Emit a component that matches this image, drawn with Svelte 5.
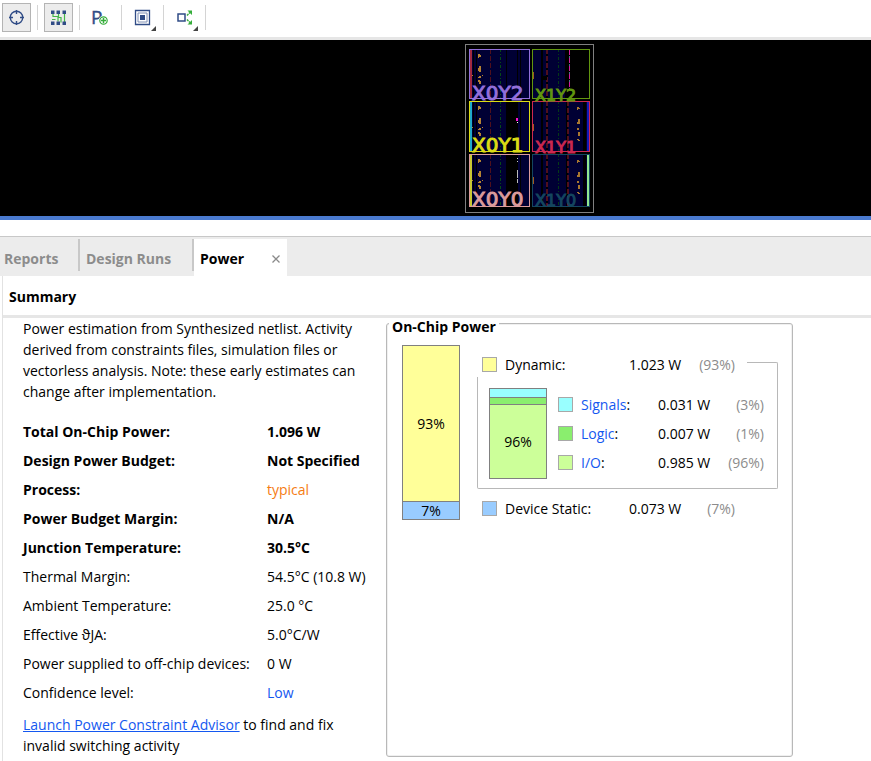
<script>
  const properties = [
    { label: 'Total On-Chip Power:', value: '1.096 W', bold: true },
    { label: 'Design Power Budget:', value: 'Not Specified', bold: true },
    { label: 'Process:', value: 'typical', bold: true, tone: 'orange' },
    { label: 'Power Budget Margin:', value: 'N/A', bold: true },
    { label: 'Junction Temperature:', value: '30.5°C', bold: true },
    { label: 'Thermal Margin:', value: '54.5°C (10.8 W)' },
    { label: 'Ambient Temperature:', value: '25.0 °C' },
    { label: 'Effective ϑJA:', value: '5.0°C/W' },
    { label: 'Power supplied to off-chip devices:', value: '0 W' },
    { label: 'Confidence level:', value: 'Low', tone: 'blue' }
  ];

  const dynamicParts = [
    { name: 'Signals', watts: '0.031 W', share: '(3%)', color: '#99ffff' },
    { name: 'Logic', watts: '0.007 W', share: '(1%)', color: '#8aee6e' },
    { name: 'I/O', watts: '0.985 W', share: '(96%)', color: '#ccff99' }
  ];

  // Clock regions of the device, in canvas units
  const regions = [
    { name: 'X0Y2', x: 4, y: 5, w: 61, h: 50, color: '#9370db', size: 20, base: 56 },
    { name: 'X1Y2', x: 67, y: 5, w: 58, h: 50, color: '#62960f', size: 16, base: 57 },
    { name: 'X0Y1', x: 4, y: 57, w: 61, h: 51, color: '#dcdc14', size: 20, base: 108, edge: '#20a8c8' },
    { name: 'X1Y1', x: 67, y: 57, w: 58, h: 51, color: '#cc2850', size: 16, base: 109 },
    { name: 'X0Y0', x: 4, y: 110, w: 61, h: 53, color: '#dc9c9c', size: 20, base: 162, edge: '#c8c832' },
    { name: 'X1Y0', x: 67, y: 110, w: 58, h: 53, color: '#14465f', size: 16, base: 162 }
  ];
</script>

<div class="app">
  <div class="toolbar" role="toolbar" aria-label="Device view">
    <button class="tool on" aria-label="Center view">
      <svg viewBox="0 0 29 29" fill="none" stroke="#304c86" stroke-width="1.4">
        <circle cx="14.5" cy="14.5" r="6.2" />
        <path d="M14.5 7v4M14.5 18v4M7 14.5h4M18 14.5h4" />
      </svg>
    </button>
    <i></i>
    <button class="tool on" aria-label="Routing resources">
      <svg viewBox="0 0 29 29" fill="none">
        <path d="M9 10v3.500h5v5M8 16.500h3.500M14.500 10v4.500h2.500v5M20.500 10v9" stroke="#45b649" stroke-width="1.2" />
        <path d="M7 7.500h3.500v3.500H7zM12.500 7.500H16v3.500h-3.500zM18.500 7.500H22v3.500h-3.500zM7 18.500h3.500V22H7zM12.500 18.500H16V22h-3.500zM18.500 18.500H22V22h-3.500z" fill="#304c86" />
      </svg>
    </button>
    <i></i>
    <button class="tool" aria-label="Add Pblock">
      <svg viewBox="0 0 29 29">
        <text x="5" y="21" font-size="19" fill="#304c86" stroke="#304c86" stroke-width=".4">P</text>
        <circle cx="17.500" cy="17.500" r="4.800" fill="#fff" />
        <circle cx="17.500" cy="17.500" r="3.700" fill="#fff" stroke="#35ad3b" stroke-width="1.200" />
        <path d="M17.500 15v5M15 17.500h5" stroke="#35ad3b" stroke-width="1.500" />
      </svg>
    </button>
    <i></i>
    <button class="tool" aria-label="Fit selection">
      <svg viewBox="0 0 29 29" fill="none" stroke="#304c86">
        <path d="M7.500 7.500h14v14h-14z" stroke-width="1.300" />
        <path d="M10 10h9v9h-9z" stroke="#8090b4" />
        <path d="M12 12h5v5h-5z" fill="#304c86" stroke="none" />
        <path d="M28 23v5h-5z" fill="#444" stroke="none" />
      </svg>
    </button>
    <i></i>
    <button class="tool" aria-label="Expand">
      <svg viewBox="0 0 29 29" fill="none">
        <path d="M8 11h7v7H8z" stroke="#304c86" stroke-width="1.500" />
        <path d="M17 12.500l3-3M17 16.500l3 3" stroke="#35ad3b" stroke-width="1.500" stroke-dasharray="2 .7" />
        <path d="M17.500 7.500H22V12zM17.500 21.500H22V17z" fill="#35ad3b" />
        <path d="M28 23v5h-5z" fill="#444" />
      </svg>
    </button>
    <i></i>
  </div>

  <div class="device">
    <svg width="129" height="169" viewBox="0 0 129 169" shape-rendering="crispEdges">
      <path d="M.5.500h128v168H.5z" fill="none" stroke="#808080" />
      {#each regions as r, n}
        {@const right = n % 2}
        <svg x={r.x} y={r.y} width={r.w} height={r.h}>
          <rect width={r.w} height={r.h} fill="#000034" />
          {#if right}
            <path d="M9.500 0v53M14.500 0v53M35 0v53" stroke="#000" stroke-width="2" />
            <path d="M14.500 0v53" stroke="#50101c" stroke-width="2" stroke-dasharray="5 2" />
            <path d="M26.500 0v53" stroke="#063b16" stroke-dasharray="3 2 1 2" />
            {#if n === 1}
              <path d="M33 0h25v53H33z" fill="#000" />
              <path d="M37.500 1v40" stroke="#d31aa0" stroke-dasharray="5 3" />
              <path d="M37.500 7v36" stroke="#55708c" stroke-dasharray="2 6" />
              <path d="M11 27h4v4h-4z" fill="#000" />
            {:else}
              <path d="M35.500 0v53" stroke="#50101c" stroke-width="2" stroke-dasharray="5 2" />
              <path d="M52 0v53" stroke="#000" stroke-width="3" />
              <path d="M45 6h2v1h1v1h-2v1h-1zM46 18h2v5h-2zM45 21h1v2h-1zM45 27h2v2h-2zM46 31h2v4h-2zM45 38h2v1h1v1h-2z" fill="#a87830" />
              <path d="M55 0h3v53h-3z" fill={n === 3 ? '#1818b8' : '#90e890'} />
            {/if}
            <path d="M1 23h1v7H1z" fill="#a05a20" />
          {:else}
            <path d="M4.500 0v53M7.500 0v53M37.500 0v53M48.500 0v53M51.500 0v53" stroke="#000" />
            {#if n > 0}<path d="M37 0h12v53H37z" fill="#000" />{/if}
            <path d="M1.500 0v53" stroke={r.edge ?? '#a02840'} stroke-width="3" />
            <path d="M21.500 0v53" stroke="#50101c" stroke-dasharray="5 2" />
            <path d="M31.500 0v53" stroke="#064b16" stroke-dasharray="3 2 1 2" />
            <path d="M9 5h2v1h1v2h-2v1H9zM10 17h2v6h-2zM9 19h1v3H9zM10 27h2v2H9v-1h1zM9 31h2v1h1v3h-2v-2H9z" fill="#b58332" />
            <path d="M3 26h1v1H3zM13 26h1v1h-1z" fill="#b58332" />
            {#if n === 2}<path d="M47 17h2v3h-2z" fill="#ff10d0" /><path d="M48 21h1v1h-1z" fill="#fff" />{/if}
            {#if n === 4}<path d="M48.500 4v5" stroke="#ccc" stroke-dasharray="1 2" /><path d="M48.500 16v13" stroke="#bbb" stroke-dasharray="8 1" />{/if}
          {/if}
        </svg>
        <rect x={r.x + 0.5} y={r.y + 0.5} width={r.w - 1} height={r.h - 1} fill="none" stroke={r.color} />
      {/each}
      {#each regions as r}
        <text class="region" x={r.x + 3} y={r.base} font-size={r.size} fill={r.color} stroke={r.color}>{r.name}</text>
      {/each}
    </svg>
  </div>

  <div class="tabs" role="tablist">
    <button class="tab reports" role="tab" aria-selected="false">Reports</button>
    <button class="tab runs" role="tab" aria-selected="false">Design Runs</button>
    <div class="active">
      <button class="tab" role="tab" aria-selected="true">Power</button>
      <button class="close" aria-label="Close Power">
        <svg width="8" height="8" viewBox="0 0 8 8"><path d="M.5.500l7 7M7.500.500l-7 7" stroke="#8a8a8a" stroke-width="1.300" /></svg>
      </button>
    </div>
  </div>

  <main>
    <h1>Summary</h1>
    <div class="content">
      <section class="summary">
        <p class="intro">Power estimation from Synthesized netlist. Activity derived from constraints files, simulation files or vectorless analysis. Note: these early estimates can change after implementation.</p>
        <table>
          <tbody>
            {#each properties as p}
              <tr class:bold={p.bold}>
                <th scope="row">{p.label}</th>
                <td class={p.tone}>{p.value}</td>
              </tr>
            {/each}
          </tbody>
        </table>
        <p class="advice"><a href="#advisor">Launch Power Constraint Advisor</a> to find and fix invalid switching activity</p>
      </section>

      <section class="onchip">
        <h2>On-Chip Power</h2>
        <div class="bar total">
          <div class="dyn">93%</div>
          <div class="stat">7%</div>
        </div>
        <div class="breakdown">
          <div class="row dynamic">
            <span class="swatch" style:background="#ffff99"></span>
            <span class="name">Dynamic:</span>
            <span class="watts">1.023 W</span>
            <span class="share">(93%)</span>
            <span class="corner"></span>
          </div>
          <div class="group">
            <div class="bar parts">
              <div class="signals"></div>
              <div class="logic"></div>
              <div class="io">96%</div>
            </div>
            <div class="list">
              {#each dynamicParts as part}
                <div class="row">
                  <span class="swatch" style:background={part.color}></span>
                  <span class="name"><a href="#{part.name}">{part.name}</a>:</span>
                  <span class="watts">{part.watts}</span>
                  <span class="share">{part.share}</span>
                </div>
              {/each}
            </div>
          </div>
          <div class="row static">
            <span class="swatch" style:background="#99ccff"></span>
            <span class="name">Device Static:</span>
            <span class="watts">0.073 W</span>
            <span class="share">(7%)</span>
          </div>
        </div>
      </section>
    </div>
  </main>
</div>

<style>
  :global(body) { margin: 0; background: #fff; }
  .app {
    display: flex;
    flex-direction: column;
    min-height: 100vh;
    font: 14px/21px "Open Sans", "Noto Sans", sans-serif;
    color: #000;
  }
  .app :global(*) { box-sizing: border-box; }
  button { font: inherit; border: 0; padding: 0; background: none; }
  h1, h2, p { margin: 0; font-size: 14px; }

  .toolbar { display: flex; align-items: center; gap: 6px; height: 40px; padding: 0 2px 2px; border-bottom: 3px solid #e6e6e6; }
  .toolbar i { width: 1px; height: 25px; background: #d4d4d4; }
  .tool { width: 29px; height: 29px; border: 1px solid transparent; }
  .tool.on { background: #ececec; border-color: #b4b4b4; }
  .tool svg { display: block; width: 29px; height: 29px; margin: -1px; }

  .device { height: 180px; padding: 4px 0 0 465px; background: #000; border-bottom: 4px solid #4a7ad0; }
  .device svg { display: block; }
  .region { font-family: "DejaVu Sans", sans-serif; stroke-width: 1; }

  .tabs { display: flex; height: 40px; margin-top: 16px; padding-top: 2px; border-top: 1px solid #c8c8c8; background: #ececec; }
  .tab { text-align: left; font-weight: 700; color: #8c8c8c; }
  .reports, .runs { height: 32px; padding: 7px 0 0 4px; border-right: 2px solid #c8c8c8; }
  .reports { width: 80px; }
  .runs { width: 114px; padding-left: 6px; }
  .active { display: flex; align-items: center; justify-content: space-between; width: 93px; padding: 2px 7px 0 6px; background: #fff; }
  .active .tab { color: #000; }
  .close { display: flex; }

  main { flex: 1; margin-left: 2px; border-left: 1px solid #e2e2e2; }
  h1 { height: 42px; padding: 10px 6px; border-bottom: 3px solid #e6e6e6; font-weight: 700; }
  .content { display: flex; }
  .summary { width: 364px; flex: none; margin-right: 19px; padding-left: 20px; }
  .intro { padding-right: 8px; }
  table { margin-top: 15px; border-collapse: collapse; white-space: nowrap; }
  th, td { height: 29px; padding: 0; text-align: left; font-weight: 400; }
  th { width: 244px; }
  .bold th, .bold td { font-weight: 700; }
  td.orange { color: #f57c14; font-weight: 400; }
  td.blue { color: #1458f0; }
  .advice { margin-top: 7px; }
  a { color: #1458f0; }

  .onchip {
    position: relative;
    display: flex;
    align-items: flex-start;
    width: 407px;
    height: 434px;
    margin-top: 5px;
    padding: 21px 14px 0 15px;
    border: 1px solid #b8b8b8;
    border-radius: 3px;
    box-shadow: inset 0 0 0 1px #f0f0f0;
  }
  h2 { position: absolute; top: -8px; left: 2px; padding: 0 3px; background: linear-gradient(transparent 4px, #fff 4px); font-weight: 700; }
  .bar { flex: none; width: 58px; border: 1px solid #808080; }
  .bar div { display: flex; align-items: center; justify-content: center; }
  .bar div + div { border-top: 1px solid #808080; }
  .dyn { height: 155px; background: #ffff99; }
  .stat { height: 18px; background: #99ccff; }
  .breakdown { flex: 1; margin: 6px 0 0 17px; }
  .row { display: flex; align-items: center; height: 29px; white-space: nowrap; }
  .swatch { width: 15px; height: 15px; flex: none; margin-right: 8px; border: 1px solid #a8a8a8; }
  .watts { width: 54px; }
  .share { color: #8c8c8c; text-align: right; }
  .dynamic { height: 26px; padding-left: 5px; }
  .dynamic .name, .static .name { width: 124px; }
  .dynamic .share, .static .share { width: 52px; }
  .corner { flex: 1; align-self: flex-end; height: 15px; margin-left: 12px; border: solid #b8b8b8; border-width: 1px 1px 0 0; border-top-right-radius: 2px; }
  .group { display: flex; padding: 11px 13px 9px 11px; border: solid #b8b8b8; border-width: 0 1px 1px; border-radius: 0 0 2px 2px; }
  .signals { height: 8px; background: #99ffff; }
  .logic { height: 7px; background: #8aee6e; }
  .io { height: 74px; background: #ccff99; }
  .list { flex: 1; margin: 2px 0 0 11px; }
  .list a { text-decoration: none; }
  .list .name { width: 77px; }
  .list .share { flex: 1; }
  .static { margin-top: 5px; padding-left: 5px; }
</style>
